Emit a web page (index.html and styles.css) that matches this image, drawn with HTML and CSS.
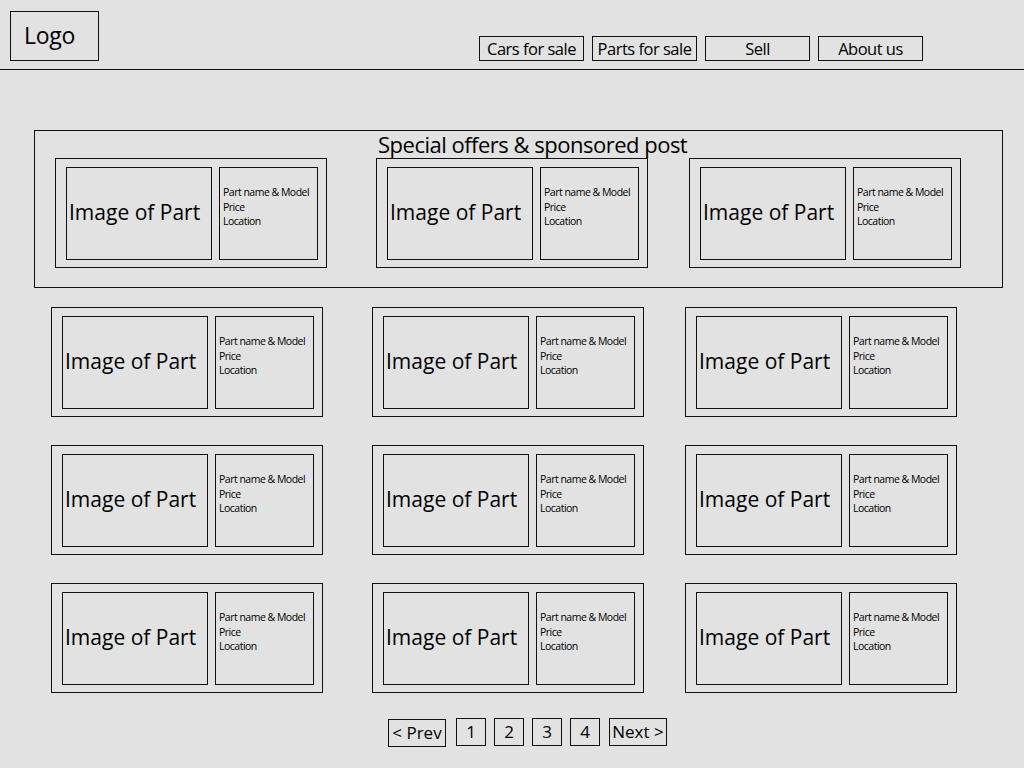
FILE: index.html
```html
<!DOCTYPE html>
<html lang="en">
<head>
<meta charset="utf-8">
<title>Parts for sale</title>
<link rel="stylesheet" href="styles.css">
</head>
<body>
<header class="header">
  <div class="logo">Logo</div>
  <nav class="nav">
    <a class="nav-btn">Cars for sale</a>
    <a class="nav-btn">Parts for sale</a>
    <a class="nav-btn">Sell</a>
    <a class="nav-btn">About us</a>
  </nav>
</header>
<main class="main">
  <section class="featured">
    <h2 class="featured-title">Special offers &amp; sponsored post</h2>
    <div class="row">
      <div class="card"><div class="card-img">Image of Part</div><div class="card-info">Part name &amp; Model<br>Price<br>Location</div></div>
      <div class="card"><div class="card-img">Image of Part</div><div class="card-info">Part name &amp; Model<br>Price<br>Location</div></div>
      <div class="card"><div class="card-img">Image of Part</div><div class="card-info">Part name &amp; Model<br>Price<br>Location</div></div>
    </div>
  </section>
  <section class="listing">
    <div class="row">
      <div class="card"><div class="card-img">Image of Part</div><div class="card-info">Part name &amp; Model<br>Price<br>Location</div></div>
      <div class="card"><div class="card-img">Image of Part</div><div class="card-info">Part name &amp; Model<br>Price<br>Location</div></div>
      <div class="card"><div class="card-img">Image of Part</div><div class="card-info">Part name &amp; Model<br>Price<br>Location</div></div>
    </div>
    <div class="row">
      <div class="card"><div class="card-img">Image of Part</div><div class="card-info">Part name &amp; Model<br>Price<br>Location</div></div>
      <div class="card"><div class="card-img">Image of Part</div><div class="card-info">Part name &amp; Model<br>Price<br>Location</div></div>
      <div class="card"><div class="card-img">Image of Part</div><div class="card-info">Part name &amp; Model<br>Price<br>Location</div></div>
    </div>
    <div class="row">
      <div class="card"><div class="card-img">Image of Part</div><div class="card-info">Part name &amp; Model<br>Price<br>Location</div></div>
      <div class="card"><div class="card-img">Image of Part</div><div class="card-info">Part name &amp; Model<br>Price<br>Location</div></div>
      <div class="card"><div class="card-img">Image of Part</div><div class="card-info">Part name &amp; Model<br>Price<br>Location</div></div>
    </div>
  </section>
  <nav class="pager">
    <a class="pg pg-prev">&lt; Prev</a>
    <a class="pg pg-num">1</a>
    <a class="pg pg-num">2</a>
    <a class="pg pg-num">3</a>
    <a class="pg pg-num">4</a>
    <a class="pg pg-next">Next &gt;</a>
  </nav>
</main>
</body>
</html>
```

FILE: styles.css
```css
* { box-sizing: border-box; }

html, body {
  margin: 0;
  padding: 0;
  background: #e2e2e2;
}

body {
  font-family: "Open Sans", "Liberation Sans", sans-serif;
  color: #000;
  width: 1024px;
  height: 768px;
  overflow: hidden;
}

.header {
  display: flex;
  align-items: flex-start;
  height: 70px;
  border-bottom: 1px solid #111;
}

.logo {
  margin: 11px 0 0 10px;
  width: 89px;
  height: 50px;
  border: 1px solid #111;
  display: flex;
  align-items: center;
  padding-left: 13px;
  font-size: 23px;
  letter-spacing: -0.3px;
  padding-bottom: 2px;
}

.nav {
  display: flex;
  gap: 8px;
  margin: 36px 101px 0 auto;
}

.nav-btn {
  width: 105px;
  height: 25px;
  border: 1px solid #111;
  display: flex;
  align-items: center;
  justify-content: center;
  font-size: 16.5px;
  letter-spacing: -0.5px;
  padding-bottom: 1px;
}

.main {
  padding-top: 60px;
}

.featured {
  margin-left: 34px;
  width: 969px;
  height: 158px;
  border: 1px solid #111;
  padding: 0 0 19px 20px;
}

.featured-title {
  margin: 0;
  height: 27px;
  line-height: 27px;
  padding-left: 323px;
  font-size: 22px;
  font-weight: 400;
  letter-spacing: -0.5px;
  white-space: nowrap;
}

.row {
  display: flex;
}

.row .card + .card { margin-left: 49px; }
.row .card:nth-child(3) { margin-left: 41px; }

.listing {
  margin: 19px 0 0 51px;
  display: flex;
  flex-direction: column;
  gap: 28px;
}

.card {
  width: 272px;
  height: 110px;
  border: 1px solid #111;
  padding: 8px 8px 7px 10px;
  display: flex;
  gap: 7px;
}

.card-img {
  width: 146px;
  height: 93px;
  border: 1px solid #111;
  display: flex;
  align-items: center;
  padding: 0 0 2px 2px;
  font-size: 21px;
  line-height: 1;
  white-space: nowrap;
}

.card-info {
  width: 99px;
  height: 93px;
  border: 1px solid #111;
  padding: 17px 0 0 3px;
  font-size: 10.5px;
  line-height: 14.5px;
  letter-spacing: -0.5px;
  white-space: nowrap;
}

.pager {
  display: flex;
  align-items: flex-start;
  gap: 8px;
  margin: 25px 0 0 388px;
}

.pg {
  height: 28px;
  border: 1px solid #111;
  display: flex;
  align-items: center;
  justify-content: center;
  font-size: 17px;
  padding-bottom: 2px;
}

.pg-prev { width: 58px; margin-top: 1px; margin-right: 2px; }
.pg-num { width: 30px; }
.pg-next { width: 58px; margin-left: 1px; }
```
